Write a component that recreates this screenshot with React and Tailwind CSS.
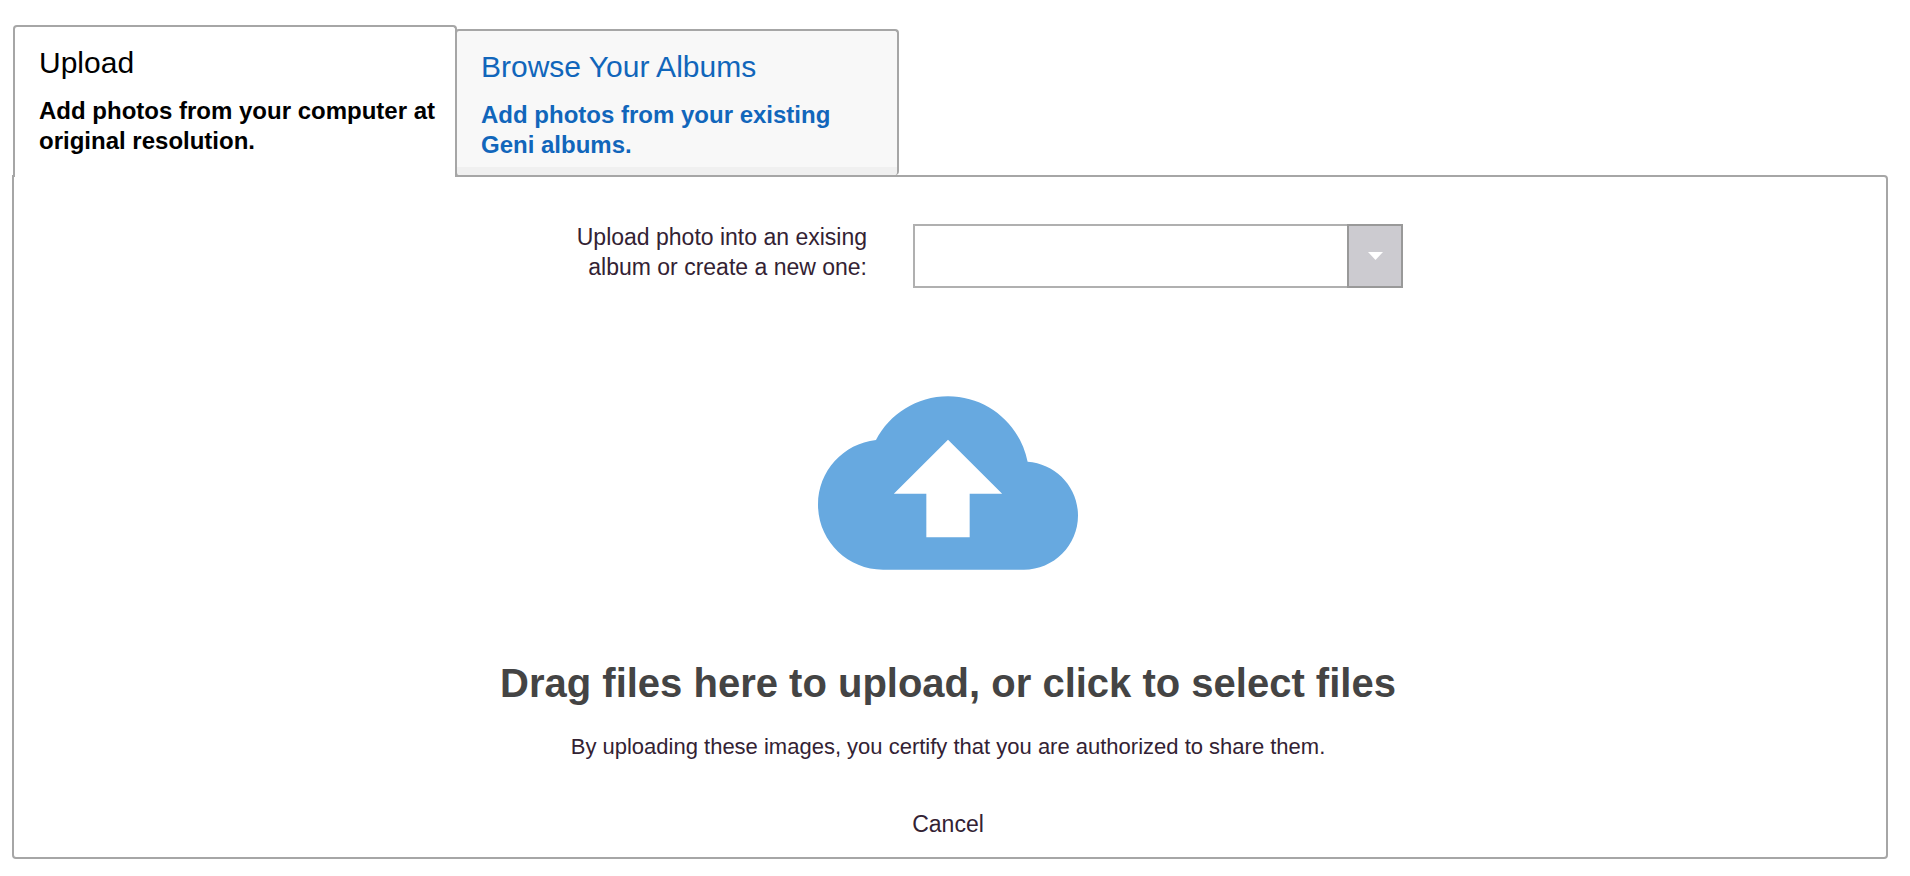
import { useRef, useState } from 'react'
import clsx from 'clsx'

const TABS = [
  { id: 'upload', title: 'Upload', text: 'Add photos from your computer at original resolution.' },
  { id: 'browse', title: 'Browse Your Albums', text: 'Add photos from your existing Geni albums.' },
]

function Tab({ tab, active, onClick }) {
  return (
    <button
      type="button"
      role="tab"
      aria-selected={active}
      onClick={onClick}
      className={clsx(
        'flex w-[444px] flex-col border-2 border-b-0 border-[#a6a6a6] pl-6 pr-2 pt-[18px] text-left rounded-t-[4px]',
        active
          ? 'relative -mb-0.5 bg-white pb-[21px] text-black'
          : '-ml-0.5 bg-[#f8f8f8] text-[#1166bb] rounded-b-[4px]'
      )}
    >
      <span className="text-[30px] leading-9">{tab.title}</span>
      <span className="mt-[15px] text-2xl leading-[30px] font-bold">{tab.text}</span>
      {!active && <span className="-ml-6 -mr-2 mt-[7px] h-2 self-stretch rounded-b-[4px] bg-[#f0f0f0]" />}
    </button>
  )
}

export default function App() {
  const [active, setActive] = useState('upload')
  const [album,  setAlbum]  = useState('')
  const fileRef = useRef(null)

  return (
    <div className="px-3 pt-[25px] pb-4 font-['Liberation_Sans',Arial,sans-serif] text-[#332233]">

      {/* Tabs */}
      <div role="tablist" className="flex items-end pl-px">
        {TABS.map((tab) => (
          <Tab key={tab.id} tab={tab} active={active === tab.id} onClick={() => setActive(tab.id)} />
        ))}
      </div>

      {/* Panel */}
      <div className="mr-[10px] flex flex-col items-center rounded-[4px] rounded-tl-none border-2 border-[#a6a6a6] pt-[45px] pb-[18px] pr-1">

        <div className="flex items-start">
          <label htmlFor="album" className="w-[374px] pl-16 text-right text-[23px] leading-[30px]">
            Upload photo into an exising album or create a new one:
          </label>
          <div className="ml-[46px] mt-0.5 flex h-16 w-[490px]">
            <input
              id="album"
              type="text"
              value={album}
              onChange={(e) => setAlbum(e.target.value)}
              className="min-w-0 flex-1 border-2 border-r-0 border-[#b0b0b0] bg-white px-3 text-[23px] focus:outline-none"
            />
            <button
              type="button"
              aria-label="Show albums"
              className="flex w-14 items-center justify-center border-2 border-[#999999] bg-[#cccbd0]"
            >
              <svg className="h-2 w-4" viewBox="0 0 16 8" fill="#fff">
                <path d="M1 0h15L8.500 8z" />
              </svg>
            </button>
          </div>
        </div>

        {/* Drop zone */}
        <button
          type="button"
          onClick={() => fileRef.current.click()}
          className="mt-[65px] flex cursor-pointer flex-col items-center"
        >
          <svg className="h-[260px] w-[260px]" viewBox="0 0 24 24" fill="#67a9e0">
            <path d="M19.35 10.04C18.67 6.59 15.64 4 12 4 9.11 4 6.6 5.64 5.35 8.04 2.34 8.36 0 10.91 0 14c0 3.31 2.69 6 6 6h13c2.76 0 5-2.24 5-5 0-2.64-2.05-4.78-4.65-4.96zM14 13v4h-4v-4H7l5-5 5 5h-3z" />
          </svg>
          <span className="mt-[46px] text-[40px] leading-[48px] font-bold text-[#444444]">
            Drag files here to upload, or click to select files
          </span>
        </button>
        <input ref={fileRef} type="file" multiple aria-label="Photos" className="hidden" />

        <p className="mt-[25px] text-[22px] leading-[30px]">
          By uploading these images, you certify that you are authorized to share them.
        </p>

        <button type="button" className="mt-[47px] cursor-pointer text-[23px] leading-[30px]">Cancel</button>
      </div>
    </div>
  )
}
